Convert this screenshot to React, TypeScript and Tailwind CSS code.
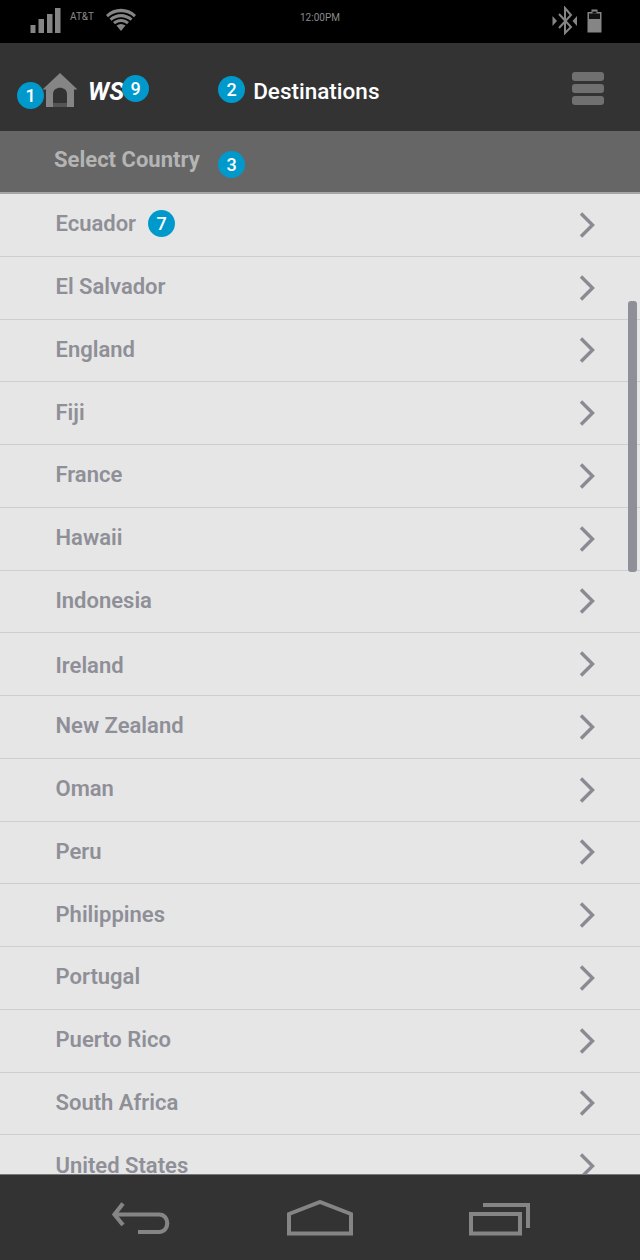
const countries = ["Ecuador","El Salvador","England","Fiji","France","Hawaii","Indonesia","Ireland","New Zealand","Oman","Peru","Philippines","Portugal","Puerto Rico","South Africa","United States"];

function Badge({ n, className = "" }: { n: number; className?: string }) {
  return (
    <span className={`flex h-[27px] w-[27px] items-center justify-center rounded-full bg-[#0099cc] text-[18px] font-medium leading-none text-white ${className}`}>{n}</span>
  );
}

function Chevron() {
  return (
    <svg width="18" height="28" viewBox="0 0 18 28" fill="none" className="shrink-0">
      <path d="M3 2.5 L14.5 14 L3 25.5" stroke="#8a8a92" strokeWidth="3.4" />
    </svg>
  );
}

export default function App() {
  return (
    <div className="flex h-[1260px] w-[640px] flex-col overflow-hidden bg-[#e6e6e6] font-['Roboto',sans-serif]">
      {/* status bar */}
      <div className="flex h-[43px] shrink-0 items-center bg-black pl-[30px] pr-[38px] text-[#8a8a8a]">
        <svg width="31" height="26" viewBox="0 0 31 26" className="mt-[-1px] shrink-0" fill="#858585">
          <rect x="0.5" y="17" width="5" height="8" />
          <rect x="8.5" y="11" width="5.5" height="14" />
          <rect x="17" y="6" width="5.5" height="19" />
          <rect x="25" y="0" width="5.5" height="25" />
        </svg>
        <span className="ml-[9px] mt-[-9px] w-[26px] text-[10px] leading-none">AT&amp;T</span>
        <svg width="30" height="24" viewBox="0 0 30 24" className="ml-[10px] mt-[-4px] shrink-0" fill="#858585">
          <path d="M0 7 C8 -1.5 22 -1.5 30 7 L28 9.2 C21 2.5 9 2.5 2 9.2Z" />
          <path d="M3.5 10.5 C10 4.5 20 4.5 26.5 10.5 L24.5 12.7 C19 8 11 8 5.5 12.7Z" />
          <path d="M7 14 C12 10 18 10 23 14 L21 16.2 C17 13.4 13 13.4 9 16.2Z" />
          <path d="M10.5 17.5 C13.5 15.5 16.5 15.5 19.5 17.5 L15 23Z" />
        </svg>
        <span className="ml-[164px] mt-[-7px] w-[40px] whitespace-nowrap text-[10px] leading-none">12:00PM</span>
        <svg width="26" height="30" viewBox="0 0 26 30" className="ml-auto mt-[-1px] shrink-0" fill="none">
          <path d="M7 8 L19 21 L13 27 L13 2 L19 9 L7 22" stroke="#858585" strokeWidth="2" />
          <path d="M0.5 10 L5 15 L0.5 20Z M25 10 L20.5 15 L25 20Z" fill="#858585" />
        </svg>
        <svg width="15" height="24" viewBox="0 0 15 24" className="ml-[9px] mt-[-2px] shrink-0">
          <path d="M4.5 3 V0.5 H10.5 V3 H14.5 V23.5 H0.5 V3Z" fill="#858585" />
          <path d="M2 4.5 H13 V10 H2Z" fill="#111" />
          <path d="M5.5 2.5 H9.5 V4.5 H5.5Z" fill="#111" />
        </svg>
      </div>

      {/* header */}
      <div className="relative flex h-[88px] shrink-0 items-center bg-[#333333] pl-[42px] pr-[36px]">
        <svg width="36" height="36" viewBox="0 0 36 36" className="mt-[6px] shrink-0">
          <path d="M18 1 L35.5 17.5 L32 17.5 L32 35 L4 35 L4 17.5 L0.5 17.5Z" fill="#858585" />
          <path d="M11 35 V22 C11 13.5 25 13.5 25 22 V35Z" fill="#333333" />
          <path d="M11 35 V31 H25 V35Z" fill="#555555" />
        </svg>
        <span className="ml-[10px] mt-[8px] text-[25px] font-bold italic leading-none text-white">WS</span>
        <span className="ml-[129px] mt-[9px] text-[22.5px] font-medium leading-none text-white">Destinations</span>
        <div className="ml-auto mt-[2px] flex w-[32px] flex-col gap-[3px]">
          <span className="h-[9px] rounded-[3px] bg-[#707070]" />
          <span className="h-[9px] rounded-[3px] bg-[#707070]" />
          <span className="h-[9px] rounded-[3px] bg-[#707070]" />
        </div>
        <Badge n={1} className="absolute left-[17px] top-[39px]" />
        <Badge n={9} className="absolute left-[122px] top-[32px]" />
        <Badge n={2} className="absolute left-[218px] top-[33px]" />
      </div>

      {/* subheader */}
      <div className="relative flex h-[61px] shrink-0 items-center bg-[#666666] pl-[54px]">
        <span className="mt-[-3px] text-[22px] font-bold leading-none text-[#b4b4b4]">Select Country</span>
        <Badge n={3} className="absolute left-[218px] top-[20px]" />
      </div>
      <div className="h-[2px] shrink-0 bg-[#a6a6a6]" />

      {/* list */}
      <div className="relative min-h-0 flex-1 overflow-hidden">
        {countries.map((c, i) => (
          <div key={c} className="relative flex h-[62.75px] items-center justify-between border-b border-[#cfcfcf] pl-[55.5px] pr-[44px]">
            <span className={`${c === "Ireland" ? "mt-[4px]" : "mt-[-1px]"} text-[22px] font-semibold leading-none text-[#8f8f98]`}>{c}</span>
            <Chevron />
            {i === 0 && <Badge n={7} className="absolute left-[148px] top-[16px]" />}
          </div>
        ))}
        <div className="absolute left-[628px] top-[107px] h-[271px] w-[9px] rounded-[3px] bg-[#8f8f98]" />
      </div>

      {/* nav */}
      <div className="flex h-[86px] shrink-0 items-center border-t border-[#777] bg-[#333333] pl-[111px]">
        <svg width="62" height="36" viewBox="0 0 62 36" className="shrink-0" fill="none" stroke="#858585" strokeWidth="4.2">
          <path d="M12 3.5 L3.5 14.5 L12 25" />
          <path d="M4 14.5 H48 C59 14.5 59 32 48 32 H27" />
        </svg>
        <svg width="66" height="36" viewBox="0 0 66 36" className="ml-[114px] shrink-0" fill="none" stroke="#858585" strokeWidth="4">
          <path d="M2 33.5 V14 L33 2 L64 14 V33.5Z" />
        </svg>
        <svg width="62" height="36" viewBox="0 0 62 36" className="ml-[116px] shrink-0" fill="none" stroke="#858585" strokeWidth="4">
          <rect x="2" y="14" width="49" height="19.5" />
          <path d="M14 5 H59 V28" />
        </svg>
      </div>
    </div>
  );
}
